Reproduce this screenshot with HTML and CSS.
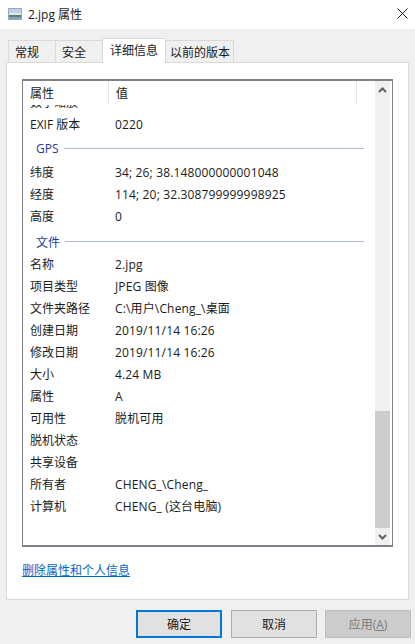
FILE: index.html
```html
<!DOCTYPE html>
<html lang="zh-CN">
<head>
  <meta charset="UTF-8" />
  <title>2.jpg 属性</title>
  <link rel="stylesheet" href="styles.css">
</head>
<body>
  <div class="dialog">
    <div class="titlebar">
      <svg class="file-icon" width="14" height="12" viewBox="0 0 14 12">
        <rect x="0.5" y="0.5" width="13" height="11" fill="#e6eef6" stroke="#9aa8b8"/>
        <rect x="1" y="1" width="12" height="4" fill="#bcd3e8"/>
        <rect x="1" y="5" width="12" height="2" fill="#dfe8e4"/>
        <rect x="1" y="7" width="12" height="2" fill="#5a8268"/>
        <rect x="1" y="9" width="12" height="2" fill="#7ea3c4"/>
      </svg>
      <span class="title-text">2.jpg 属性</span>
      <svg class="close-icon" width="11" height="11" viewBox="0 0 11 11">
        <path d="M0.5 0.5L10.5 10.5M10.5 0.5L0.5 10.5" stroke="#1a1a1a" stroke-width="1" fill="none"/>
      </svg>
    </div>

    <div class="tabs">
      <div class="tab tab-general">常规</div>
      <div class="tab tab-security">安全</div>
      <div class="tab tab-active">详细信息</div>
      <div class="tab tab-previous">以前的版本</div>
    </div>

    <div class="panel">
      <div class="list">
        <div class="list-main">
          <div class="list-head">
            <div class="head-cell head-name">属性</div>
            <div class="head-cell head-value">值</div>
            <div class="head-cell head-rest"></div>
          </div>
          <div class="list-body">
            <div class="rows">
              <div class="row"><span class="name">数字缩放</span><span class="value"></span></div>
              <div class="row"><span class="name">EXIF 版本</span><span class="value">0220</span></div>
              <div class="group group-gps"><span class="group-label">GPS</span><span class="group-line"></span></div>
              <div class="row"><span class="name">纬度</span><span class="value">34; 26; 38.148000000001048</span></div>
              <div class="row"><span class="name">经度</span><span class="value">114; 20; 32.308799999998925</span></div>
              <div class="row"><span class="name">高度</span><span class="value">0</span></div>
              <div class="group group-file"><span class="group-label">文件</span><span class="group-line"></span></div>
              <div class="row"><span class="name">名称</span><span class="value">2.jpg</span></div>
              <div class="row"><span class="name">项目类型</span><span class="value">JPEG 图像</span></div>
              <div class="row"><span class="name">文件夹路径</span><span class="value">C:\用户\Cheng_\桌面</span></div>
              <div class="row"><span class="name">创建日期</span><span class="value">2019/11/14 16:26</span></div>
              <div class="row"><span class="name">修改日期</span><span class="value">2019/11/14 16:26</span></div>
              <div class="row"><span class="name">大小</span><span class="value">4.24 MB</span></div>
              <div class="row"><span class="name">属性</span><span class="value">A</span></div>
              <div class="row"><span class="name">可用性</span><span class="value">脱机可用</span></div>
              <div class="row"><span class="name">脱机状态</span><span class="value"></span></div>
              <div class="row"><span class="name">共享设备</span><span class="value"></span></div>
              <div class="row"><span class="name">所有者</span><span class="value">CHENG_\Cheng_</span></div>
              <div class="row"><span class="name">计算机</span><span class="value">CHENG_ (这台电脑)</span></div>
            </div>
          </div>
        </div>
        <div class="scrollbar">
          <div class="arrow">
            <svg width="9" height="6" viewBox="0 0 9 6"><path d="M1 5L4.5 1.5L8 5" stroke="#606060" stroke-width="2" fill="none"/></svg>
          </div>
          <div class="track"></div>
          <div class="thumb"></div>
          <div class="arrow">
            <svg width="9" height="6" viewBox="0 0 9 6"><path d="M1 1L4.5 4.5L8 1" stroke="#606060" stroke-width="2" fill="none"/></svg>
          </div>
        </div>
      </div>
      <a class="remove-link" href="#">删除属性和个人信息</a>
    </div>

    <div class="buttons">
      <button class="btn btn-default">确定</button>
      <button class="btn">取消</button>
      <button class="btn btn-disabled">应用(<u>A</u>)</button>
    </div>
  </div>
</body>
</html>
```

FILE: styles.css
```css
* {
  box-sizing: border-box;
}

html, body {
  margin: 0;
  padding: 0;
}

body {
  width: 415px;
  height: 644px;
  overflow: hidden;
  background-color: #f0f0f0;
  color: #1a1a1a;
  font-family: "Open Sans", "Noto Sans CJK SC", sans-serif;
  font-size: 12px;
}

.dialog {
  display: flex;
  flex-direction: column;
  height: 644px;
}

.titlebar {
  display: flex;
  align-items: center;
  height: 29px;
  padding: 0 7px 2px 8px;
  background-color: #fff;
}

.file-icon {
  margin-right: 6px;
}

.title-text {
  flex: 1;
}

.tabs {
  display: flex;
  align-items: flex-end;
  height: 33px;
  padding-left: 8px;
  position: relative;
  z-index: 1;
}

.tab {
  display: flex;
  align-items: center;
  height: 22px;
  padding-left: 6px;
  border: 1px solid #d9d9d9;
  border-bottom: none;
  border-right: none;
  background-color: #f0f0f0;
  white-space: nowrap;
}

.tab-general,
.tab-security {
  width: 47px;
}

.tab-previous {
  width: 69px;
  padding-left: 4px;
  border-right: 1px solid #d9d9d9;
}

.tab-active {
  width: 63px;
  height: 25px;
  margin-bottom: -1px;
  padding-left: 7px;
  padding-bottom: 3px;
  background-color: #fff;
}

.panel {
  width: 403px;
  height: 538px;
  margin-left: 6px;
  padding: 16px 15px 0 15px;
  background-color: #fff;
  border: 1px solid #d9d9d9;
}

.list {
  display: flex;
  width: 371px;
  height: 468px;
  padding-right: 2px;
  border: 1px solid #82818a;
  border-top-width: 2px;
  border-bottom-width: 2px;
}

.list-main {
  flex: 1;
  min-width: 0;
  display: flex;
  flex-direction: column;
}

.list-head {
  display: flex;
  height: 24px;
  flex-shrink: 0;
}

.head-cell {
  display: flex;
  align-items: center;
  padding-left: 7px;
  border-right: 1px solid #e5e5e5;
}

.head-name {
  width: 86px;
}

.head-value {
  width: 248px;
}

.head-rest {
  flex: 1;
  border-right: none;
}

.list-body {
  flex: 1;
  overflow: hidden;
}

.rows {
  margin-top: -14px;
}

.row {
  display: flex;
  align-items: center;
  height: 22px;
}

.name {
  width: 92px;
  padding-left: 7px;
  flex-shrink: 0;
  white-space: nowrap;
}

.value {
  letter-spacing: 0.15px;
  white-space: nowrap;
}

.group {
  display: flex;
  align-items: center;
  height: 26px;
  padding-left: 13px;
  padding-right: 11px;
}

.group-file {
  padding-top: 3px;
}

.group-label {
  color: #1e3a9e;
  margin-right: 5px;
}

.group-line {
  flex: 1;
  height: 1px;
  background-color: #b0bcd6;
}

.scrollbar {
  display: flex;
  flex-direction: column;
  width: 15px;
  background-color: #f0f0f0;
}

.arrow {
  display: flex;
  align-items: center;
  justify-content: center;
  height: 17px;
  flex-shrink: 0;
}

.track {
  height: 313px;
}

.thumb {
  flex: 1;
  background-color: #cdcdcd;
}

.remove-link {
  display: block;
  margin-top: 14px;
  color: #0066cc;
}

.buttons {
  display: flex;
  justify-content: flex-end;
  gap: 8px;
  padding: 10px 4px 0 0;
}

.btn {
  width: 86px;
  height: 28px;
  padding: 0;
  border: 1px solid #adadad;
  background-color: #e1e1e1;
  color: #1a1a1a;
  font-family: inherit;
  font-size: 12px;
}

.btn-default {
  margin-right: 1px;
  border: 2px solid #0078d7;
}

.btn-disabled {
  background-color: #cccccc;
  border-color: #bfbfbf;
  color: #7a7a7a;
}
```
